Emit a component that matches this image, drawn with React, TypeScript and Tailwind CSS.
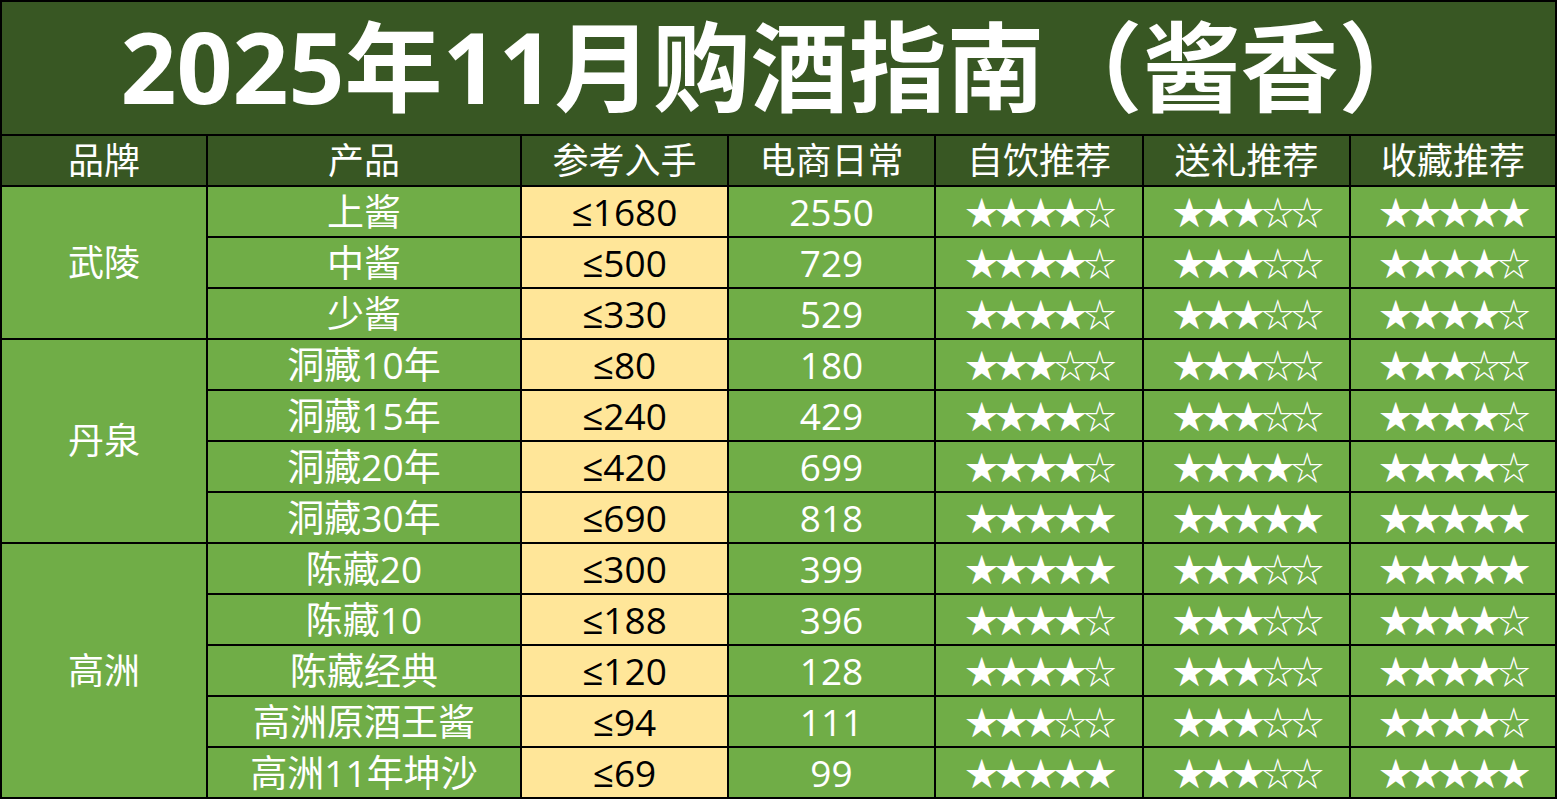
import { Fragment } from "react";

const font = { fontFamily: '"Open Sans", "Noto Sans CJK SC", sans-serif' };

type Row = { name: string; price: string; online: string; self: number; gift: number; keep: number };

const groups: { brand: string; rows: Row[] }[] = [
  {
    brand: "武陵",
    rows: [
      { name: "上酱", price: "≤1680", online: "2550", self: 4, gift: 3, keep: 5 },
      { name: "中酱", price: "≤500", online: "729", self: 4, gift: 3, keep: 4 },
      { name: "少酱", price: "≤330", online: "529", self: 4, gift: 3, keep: 4 },
    ],
  },
  {
    brand: "丹泉",
    rows: [
      { name: "洞藏10年", price: "≤80", online: "180", self: 3, gift: 3, keep: 3 },
      { name: "洞藏15年", price: "≤240", online: "429", self: 4, gift: 3, keep: 4 },
      { name: "洞藏20年", price: "≤420", online: "699", self: 4, gift: 4, keep: 4 },
      { name: "洞藏30年", price: "≤690", online: "818", self: 5, gift: 5, keep: 5 },
    ],
  },
  {
    brand: "高洲",
    rows: [
      { name: "陈藏20", price: "≤300", online: "399", self: 5, gift: 3, keep: 5 },
      { name: "陈藏10", price: "≤188", online: "396", self: 4, gift: 3, keep: 4 },
      { name: "陈藏经典", price: "≤120", online: "128", self: 4, gift: 3, keep: 4 },
      { name: "高洲原酒王酱", price: "≤94", online: "111", self: 3, gift: 3, keep: 4 },
      { name: "高洲11年坤沙", price: "≤69", online: "99", self: 5, gift: 3, keep: 5 },
    ],
  },
];

const headers = ["品牌", "产品", "参考入手", "电商日常", "自饮推荐", "送礼推荐", "收藏推荐"];

function Stars({ n }: { n: number }) {
  return (
    <div className="flex h-full items-center justify-center bg-[#70ad47] text-white">
      <span
        className="text-[33px] leading-none tracking-[-3.5px]"
        style={{ fontFamily: '"Noto Sans CJK SC", sans-serif' }}
      >
        {"★".repeat(n) + "☆".repeat(5 - n)}
      </span>
    </div>
  );
}

export default function App() {
  return (
    <div
      className="grid h-[799px] w-[1557px] gap-[2px] border-2 border-black bg-black"
      style={{
        ...font,
        gridTemplateColumns: "204px 312px 205px 205px 206px 205px 204px",
        gridTemplateRows: "132px 49px repeat(12, 49px)",
      }}
    >
      <div className="col-span-7 flex items-center justify-center bg-[#385723] pb-1 text-[98px] leading-none font-bold text-white">
        2025年11月购酒指南（酱香）
      </div>
      {headers.map((h) => (
        <div
          key={h}
          className="flex items-center justify-center bg-[#385723] text-[36px] leading-none text-white"
        >
          {h}
        </div>
      ))}
      {groups.map((g) => (
        <Fragment key={g.brand}>
          <div
            className="flex items-center justify-center bg-[#70ad47] text-[36px] text-white"
            style={{ gridRow: `span ${g.rows.length}` }}
          >
            {g.brand}
          </div>
          {g.rows.map((r) => (
            <Fragment key={r.name}>
              <div className="flex items-center justify-center bg-[#70ad47] text-[37px] leading-none text-white">
                {r.name}
              </div>
              <div className="flex items-center justify-center bg-[#ffe699] text-[37px] leading-none text-black">
                {r.price}
              </div>
              <div className="flex items-center justify-center bg-[#70ad47] text-[37px] leading-none text-white">
                {r.online}
              </div>
              <Stars n={r.self} />
              <Stars n={r.gift} />
              <Stars n={r.keep} />
            </Fragment>
          ))}
        </Fragment>
      ))}
    </div>
  );
}
